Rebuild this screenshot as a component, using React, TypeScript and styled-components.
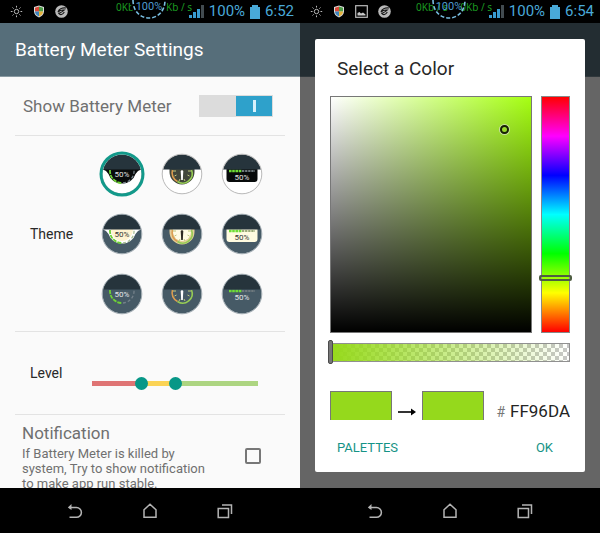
import React, { useState } from "react";
import styled, { createGlobalStyle } from "styled-components";

const GlobalStyle = createGlobalStyle`
  *, *::before, *::after { box-sizing: border-box; }
  body { margin: 0; background: #000; font-family: Roboto, "Noto Sans", sans-serif; }
  button, input { font: inherit; color: inherit; margin: 0; padding: 0; border: 0; background: none; }
`;

const Screens = styled.main`
  display: grid;
  grid-template-columns: 1fr 1fr;
  height: 100vh;
`;

const Phone = styled.section`
  display: flex;
  flex-direction: column;
  min-width: 0;
  min-height: 0;
`;

const StatusBarRoot = styled.header`
  position: relative;
  display: flex;
  flex: none;
  align-items: center;
  height: 23px;
  padding: 0 6px 0 10px;
  background: #000;
  color: #49a9d8;
`;

const NoticeIcons = styled.div`
  display: flex;
  flex: 1;
  gap: 10px;
`;

const StatusReadings = styled.div`
  display: flex;
  align-items: center;
  gap: 5px;
  font-size: 15px;
  line-height: 23px;
`;

const MeterOverlay = styled.div`
  position: absolute;
  top: 0;
  left: 50%;
  width: 80px;
  height: 23px;
  margin-left: -36px;
  overflow: hidden;
`;

const Speeds = styled.div`
  display: flex;
  justify-content: space-between;
  padding: 0 2px;
  color: #1b9a20;
  font-family: "Noto Sans", sans-serif;
  font-size: 10px;
  line-height: 14px;
  white-space: pre;
`;

const Dial = styled.div<{ $solid: boolean }>`
  position: absolute;
  top: 0;
  left: 17px;
  width: 36px;
  height: 21px;
  border-radius: 0 0 18px 18px;
  background: ${(p) => (p.$solid ? "#000" : "transparent")};
  color: #4f9bd0;
  font-size: 11px;
  line-height: 14px;
  text-align: center;
  svg { position: absolute; top: 0; left: 0; }
`;

const AppBar = styled.div`
  display: flex;
  flex: none;
  align-items: center;
  height: 54px;
  padding: 0 15px;
  background: #566e7a;
  border-bottom: 1px solid #899aa2;
`;

const AppTitle = styled.h1`
  margin: 0;
  color: #fff;
  font-size: 19px;
  font-weight: 400;
  line-height: 24px;
`;

const SettingsBody = styled.div`
  flex: 1;
  min-height: 0;
  overflow: hidden;
  padding: 0 15px;
  background: #fafafa;
`;

const SettingRow = styled.div<{ $height: number }>`
  display: flex;
  align-items: center;
  height: ${(p) => p.$height}px;
  padding: 0 12px 0 8px;
  border-bottom: 1px solid #e3e3e3;
`;

const RowTitle = styled.label`
  flex: 1;
  color: #707070;
  font-size: 17px;
  line-height: 20px;
`;

const SwitchTrack = styled.button`
  display: flex;
  width: 74px;
  height: 22px;
  justify-content: flex-end;
  background: #dcdcdc;
`;

const SwitchThumb = styled.span`
  display: flex;
  align-items: center;
  justify-content: center;
  width: 36px;
  height: 20px;
  margin: 1px;
  background: #2ea1cb;
  &::before { content: ""; width: 3px; height: 12px; background: #d6f1fb; }
`;

const FieldLabel = styled.span`
  flex: none;
  width: 69px;
  padding-left: 7px;
  color: #292929;
  font-size: 14px;
  line-height: 20px;
`;

const ThemeGrid = styled.div`
  display: grid;
  grid-template-columns: repeat(3, 60px);
  grid-auto-rows: 60px;
`;

const ThemeOption = styled.label`
  display: flex;
  align-items: center;
  justify-content: center;
  cursor: pointer;
`;

const HiddenRadio = styled.input`
  position: absolute;
  width: 1px;
  height: 1px;
  opacity: 0;
`;

const LevelTrack = styled.div`
  display: grid;
  flex: 1;
  margin: 20px 15px 0 0;
  align-items: center;
`;

const LevelBar = styled.div`
  grid-area: 1 / 1;
  height: 5px;
  background: linear-gradient(to right, #df7474 0 30%, #fbd355 30% 50%, #add581 50%);
`;

const LevelRange = styled.input`
  grid-area: 1 / 1;
  width: 100%;
  height: 13px;
  appearance: none;
  pointer-events: none;
  &::-webkit-slider-thumb {
    appearance: none;
    width: 13px;
    height: 13px;
    border-radius: 50%;
    background: #079787;
    pointer-events: auto;
  }
`;

const NoticeRow = styled.div`
  display: flex;
  padding: 8px 24px 0 7px;
  color: #707070;
`;

const NoticeText = styled.label`
  display: block;
  flex: 1;
  font-size: 13px;
  line-height: 15px;
`;

const NoticeTitle = styled.span`
  display: block;
  margin-bottom: 3px;
  font-size: 17px;
  line-height: 20px;
`;

const TickBox = styled.input`
  appearance: none;
  flex: none;
  width: 16px;
  height: 16px;
  margin-top: 25px;
  border: 2px solid #777;
  border-radius: 2px;
  &:checked { background: #079787; }
`;

const NavRoot = styled.nav`
  display: grid;
  flex: none;
  grid-template-columns: repeat(3, 75px);
  justify-content: center;
  height: 45px;
  background: #000;
`;

const NavButton = styled.button`
  display: flex;
  align-items: center;
  justify-content: center;
`;

const DimmedArea = styled.div`
  display: flex;
  flex: 1;
  flex-direction: column;
  min-height: 0;
  padding: 0 15px 16px;
  background: linear-gradient(to bottom, #232d32 0 53px, #30383c 53px 54px, #656565 54px);
`;

const Dialog = styled.div`
  display: flex;
  flex: 1;
  flex-direction: column;
  margin-top: 16px;
  padding: 18px 15px 12px;
  border-radius: 2px;
  background: #fff;
`;

const DialogTitle = styled.h2`
  margin: 0 0 15px;
  padding-left: 7px;
  color: #282828;
  font-size: 19px;
  font-weight: 400;
  line-height: 24px;
`;

const PickerRow = styled.div`
  display: flex;
  flex: 1;
  gap: 9px;
`;

const ShadeField = styled.div`
  position: relative;
  flex: 1;
  border: 1px solid #777;
  background:
    linear-gradient(to top, #000, transparent),
    linear-gradient(to right, #fff, #a6ff12);
`;

const ShadeMarker = styled.button`
  position: absolute;
  left: 87%;
  top: 14%;
  width: 9px;
  height: 9px;
  margin: -5px;
  border: 2px solid #182008;
  border-radius: 50%;
  box-shadow: 0 0 0 1px #c9dba6;
`;

const HueBar = styled.div`
  position: relative;
  width: 29px;
  border: 1px solid #888;
  background: linear-gradient(to bottom, #f00, #f0f, #00f, #0ff, #0f0, #ff0, #f00);
`;

const HueMarker = styled.div`
  position: absolute;
  left: -3px;
  right: -3px;
  top: 77%;
  height: 6px;
  margin-top: -3px;
  border: 2px solid #4e5d42;
  border-radius: 2px;
`;

const AlphaBar = styled.div`
  position: relative;
  height: 19px;
  margin-top: 10px;
  border: 1px solid #909090;
  background:
    linear-gradient(to right, #96da1b, transparent),
    repeating-conic-gradient(#c7c7c7 0 25%, #fff 0 50%) 0 0 / 8px 8px;
`;

const AlphaMarker = styled.div`
  position: absolute;
  left: -3px;
  top: -4px;
  width: 5px;
  height: 24px;
  border: 1px solid #4b4b4b;
  border-radius: 2px;
  background: #777;
`;

const ResultRow = styled.div`
  display: flex;
  height: 29px;
  margin-top: 29px;
`;

const Swatch = styled.div`
  width: 62px;
  border: 1px solid #777;
  border-bottom: 0;
  background: #95d91c;
`;

const ArrowBox = styled.div`
  display: flex;
  align-items: flex-end;
  justify-content: center;
  width: 30px;
  padding-bottom: 3px;
`;

const HexLabel = styled.label`
  display: flex;
  flex: 1;
  align-items: flex-end;
  justify-content: flex-end;
  gap: 5px;
  min-width: 0;
  color: #777;
  font-size: 14px;
  line-height: 16px;
`;

const HexInput = styled.input`
  width: 60px;
  height: 18px;
  color: #242424;
  font-size: 17px;
  line-height: 18px;
`;

const DialogActions = styled.div`
  display: flex;
  justify-content: space-between;
  margin-top: 16px;
  padding: 0 17px 0 7px;
`;

const TextButton = styled.button`
  color: #159386;
  font-size: 13px;
  line-height: 24px;
`;

function SunIcon() {
  return (
    <svg width="13" height="13" viewBox="0 0 13 13" fill="none" stroke="#b9b9b9" strokeWidth="1">
      <circle cx="6.5" cy="6.5" r="2.2" />
      <path d="M6.5 .8v1.7M6.5 10.5v1.7M.8 6.5h1.7M10.5 6.5h1.7M2.5 2.5l1.1 1.1M9.4 9.4l1.1 1.1M2.5 10.5l1.1-1.1M9.4 3.6l1.1-1.1" />
    </svg>
  );
}

function ShieldIcon() {
  return (
    <svg width="12" height="13" viewBox="0 0 12 13">
      <path d="M6 .5 11 2v4.5c0 3-2.5 5-5 6-2.5-1-5-3-5-6V2Z" fill="#ddd" />
      <path d="M6 1.5V6.5H2V2.7Z" fill="#d94a38" />
      <path d="M6 1.5 10 2.7V6.5H6Z" fill="#4e9e49" />
      <path d="M2 6.5h4v5C3.5 10.4 2 8.8 2 6.5Z" fill="#3d83bb" />
      <path d="M10 6.5H6v5c2.5-1.1 4-2.7 4-5Z" fill="#e4b13a" />
    </svg>
  );
}

function PictureIcon() {
  return (
    <svg width="13" height="13" viewBox="0 0 13 13">
      <rect x=".7" y=".7" width="11.6" height="11.6" fill="none" stroke="#bcbcbc" strokeWidth="1.2" />
      <path d="M2.5 10.5V8l2-1 1.5 1.6L8 7.5l2.5 2v1Z" fill="#c8c8c8" />
    </svg>
  );
}

function SwooshIcon() {
  return (
    <svg width="13" height="13" viewBox="0 0 13 13">
      <circle cx="6.5" cy="6.5" r="6.3" fill="#b9b9b9" />
      <path d="M11 3C7 2.500 3.700 4.200 3 7.200c1.500-1.900 3.500-2.400 6.300-2.200L6.800 6.900 3.800 8.400c1.300 1.900 4 1.500 5.500-1.300" fill="none" stroke="#151515" strokeWidth="1.1" />
    </svg>
  );
}

function StatusBar({ time, picture }: { time: string; picture?: boolean }) {
  return (
    <StatusBarRoot>
      <NoticeIcons>
        <SunIcon />
        <ShieldIcon />
        {picture && <PictureIcon />}
        <SwooshIcon />
      </NoticeIcons>
      <StatusReadings>
        <svg width="15" height="15" viewBox="0 0 15 15">
          <path d="M0 14v-3h3v3ZM4 14V8h3v6ZM8 14V5h3v9Z" fill="#399bd0" />
          <path d="M12 14V1h3v13Z" fill="#424b50" />
        </svg>
        <span>100%</span>
        <svg width="10" height="14" viewBox="0 0 10 14">
          <path d="M0 2h2V0h6v2h2v12H0Z" fill="#49a9d8" />
        </svg>
        <time>{time}</time>
      </StatusReadings>
      <MeterOverlay>
        <Speeds>
          <span>0Kb / s</span>
          <span>0Kb / s</span>
        </Speeds>
        <Dial $solid={!picture}>
          100%
          <svg width="36" height="21" viewBox="0 0 36 21">
            <path d="M2 0C2 24 34 24 34 0" fill="none" stroke="#78bde0" strokeWidth="1.6" strokeDasharray="4 2" />
          </svg>
        </Dial>
      </MeterOverlay>
    </StatusBarRoot>
  );
}

function NavBar() {
  const line = { fill: "none", stroke: "#b4b4b4", strokeWidth: 1.5 };
  return (
    <NavRoot>
      <NavButton aria-label="Back">
        <svg width="16" height="16" viewBox="0 0 16 16" {...line}>
          <path d="M2 4.5h7.5a4.9 4.9 0 0 1 0 9.8H2.500" />
          <path d="M4.5 1 .8 4.5l3.700 2.500Z" fill="#b4b4b4" stroke="none" />
        </svg>
      </NavButton>
      <NavButton aria-label="Home">
        <svg width="16" height="16" viewBox="0 0 16 16" {...line}>
          <path d="M2 14.2V6.8l6-5.5 6 5.5v7.4Z" />
        </svg>
      </NavButton>
      <NavButton aria-label="Recent apps">
        <svg width="16" height="16" viewBox="0 0 16 16" {...line}>
          <path d="M1.2 5.5h10.300v9H1.200ZM5 2h9.500v9" />
        </svg>
      </NavButton>
    </NavRoot>
  );
}

type Shape = "arc" | "gauge" | "bar";
type Tone = "black" | "cream" | "clear";

const tones = {
  black: { base: "#fff", rim: "#b9b9b9", panel: "#080b0b", text: "#e2e2e2" },
  cream: { base: "#465a66", rim: "#9ba6ad", panel: "#fffbe0", text: "#333" },
  clear: { base: "#465a66", rim: "#9ba6ad", panel: "none", text: "#e4e7e8" },
};

function ThemeBadge({ shape, tone, selected }: { shape: Shape; tone: Tone; selected: boolean }) {
  const t = tones[tone];
  const id = `disc-${shape}-${tone}`;
  return (
    <svg width="46" height="46" viewBox="0 0 46 46" fontFamily="Roboto, sans-serif" fontSize="8" textAnchor="middle">
      <clipPath id={id}><circle cx="23" cy="23" r="19.5" /></clipPath>
      <g clipPath={`url(#${id})`}>
        <path d="M0 0h46v46H0Z" fill={t.base} />
        {shape === "arc" && (
          <>
            <path d="M3 18h40l-4 2-2.5 3a14 13 0 0 1-27 0L7 20Z" fill={tone === "cream" ? "#fff" : t.panel} />
            {tone === "cream" && <path d="M12 18a11 12 0 0 0 22 0Z" fill="#fff3d0" />}
            <path d="M11 19a12 12 0 0 0 12 13" fill="none" stroke="#6ed035" strokeWidth="1.800" strokeDasharray="4 1" />
            <path d="M24 32a12 12 0 0 0 11-13" fill="none" stroke={tone === "cream" ? "#a9bf93" : "#74818a"} strokeWidth="1.300" strokeDasharray="3 2" />
          </>
        )}
        {shape === "gauge" && (
          <>
            {tone !== "clear" && <path d="M10.5 16v5a12.5 12.5 0 0 0 25 0v-5Z" fill={tone === "black" ? "#41473b" : "#e4cf98"} />}
            {tone === "cream" && <path d="M14 16v5a9 9 0 0 0 18 0v-5Z" fill="#fffbe3" />}
            <path d="M13.500 19a9.500 9.500 0 0 0 5 11.500" fill="none" stroke="#dc9d50" strokeWidth="1.600" />
            <path d="M18.500 30.500a9.500 9.500 0 0 0 14-11.500" fill="none" stroke="#96cb55" strokeWidth="1.600" />
            <path d="M14 20h3M15.500 25l2-1M20 30l1-2M26 30l-1-2M30.500 25l-2-1M32 20h-3" stroke="#bec77f" />
            <path d="m21.700 20 1.300-1 1.300 1-.5 9h-1.600Z" fill={tone === "cream" ? "#302b24" : "#fff"} />
          </>
        )}
        {shape === "bar" && (
          <>
            <path d="M7.5 16h31v12a3 3 0 0 1-3 3h-25a3 3 0 0 1-3-3Z" fill={t.panel} />
            <path d="M10 20h13" stroke="#6ede36" strokeWidth="2.400" strokeDasharray="2.600 .6" />
            <path d="M23 20h13" stroke={tone === "cream" ? "#9aaa78" : "#6e797e"} strokeWidth="2.200" strokeDasharray="2.300 .8" />
          </>
        )}
        <path d="M0 0h46v18.500H0Z" fill="#26343c" />
        {shape !== "gauge" && (
          <text x="23" y={shape === "arc" ? 26 : 29} fill={t.text}>50%</text>
        )}
      </g>
      <circle cx="23" cy="23" r="19.800" fill="none" stroke={t.rim} strokeWidth="1" />
      {selected && <circle cx="23" cy="23" r="21" fill="none" stroke="#12998a" strokeWidth="3" />}
    </svg>
  );
}

const shapes: Shape[] = ["arc", "gauge", "bar"];
const options = (["black", "cream", "clear"] as Tone[]).flatMap((tone) =>
  shapes.map((shape) => ({ tone, shape, key: `${shape}-${tone}` })),
);

function SettingsScreen() {
  const [theme, setTheme] = useState("arc-black");
  const [shown, setShown] = useState(true);
  return (
    <Phone>
      <StatusBar time="6:52" />
      <AppBar><AppTitle>Battery Meter Settings</AppTitle></AppBar>
      <SettingsBody>
        <SettingRow $height={59}>
          <RowTitle htmlFor="show-meter">Show Battery Meter</RowTitle>
          <SwitchTrack id="show-meter" role="switch" aria-checked={shown} onClick={() => setShown(!shown)}>
            <SwitchThumb />
          </SwitchTrack>
        </SettingRow>
        <SettingRow $height={196}>
          <FieldLabel id="theme-label">Theme</FieldLabel>
          <ThemeGrid role="radiogroup" aria-labelledby="theme-label">
            {options.map((o) => (
              <ThemeOption key={o.key} aria-label={`${o.tone} ${o.shape}`}>
                <HiddenRadio type="radio" name="theme" checked={theme === o.key} onChange={() => setTheme(o.key)} />
                <ThemeBadge shape={o.shape} tone={o.tone} selected={theme === o.key} />
              </ThemeOption>
            ))}
          </ThemeGrid>
        </SettingRow>
        <SettingRow $height={83}>
          <FieldLabel>Level</FieldLabel>
          <LevelTrack>
            <LevelBar />
            <LevelRange type="range" aria-label="Low level" defaultValue={28} />
            <LevelRange type="range" aria-label="Medium level" defaultValue={50} />
          </LevelTrack>
        </SettingRow>
        <NoticeRow>
          <NoticeText htmlFor="notification">
            <NoticeTitle>Notification</NoticeTitle>
            If Battery Meter is killed by<br />system, Try to show notification<br />to make app run stable.
          </NoticeText>
          <TickBox id="notification" type="checkbox" />
        </NoticeRow>
      </SettingsBody>
      <NavBar />
    </Phone>
  );
}

function ColorScreen() {
  return (
    <Phone>
      <StatusBar time="6:54" picture />
      <DimmedArea>
        <Dialog role="dialog" aria-labelledby="color-title">
          <DialogTitle id="color-title">Select a Color</DialogTitle>
          <PickerRow>
            <ShadeField><ShadeMarker aria-label="Shade" /></ShadeField>
            <HueBar><HueMarker /></HueBar>
          </PickerRow>
          <AlphaBar><AlphaMarker /></AlphaBar>
          <ResultRow>
            <Swatch />
            <ArrowBox>
              <svg width="20" height="10" viewBox="0 0 20 10">
                <path d="M1 5h14" stroke="#000" strokeWidth="1.6" />
                <path d="m14 1.5 5 3.5-5 3.5Z" />
              </svg>
            </ArrowBox>
            <Swatch />
            <HexLabel>
              <span>#</span>
              <HexInput aria-label="Hex color" defaultValue="FF96DA" />
            </HexLabel>
          </ResultRow>
          <DialogActions>
            <TextButton>PALETTES</TextButton>
            <TextButton>OK</TextButton>
          </DialogActions>
        </Dialog>
      </DimmedArea>
      <NavBar />
    </Phone>
  );
}

export default function App() {
  return (
    <>
      <GlobalStyle />
      <Screens>
        <SettingsScreen />
        <ColorScreen />
      </Screens>
    </>
  );
}
